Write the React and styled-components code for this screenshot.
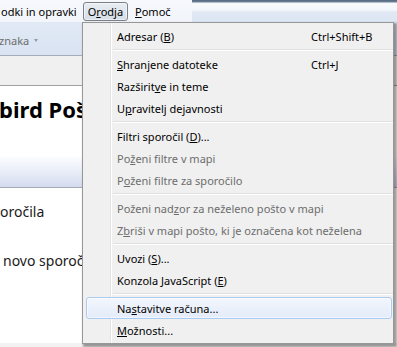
import React from 'react';
import styled, { createGlobalStyle } from 'styled-components';

const Global = createGlobalStyle`
  html, body { margin: 0; padding: 0; }
  body {
    width: 397px;
    height: 347px;
    overflow: hidden;
    background: #ffffff;
    font-family: "Noto Sans", "Open Sans", sans-serif;
  }
`;

const Window = styled.div`
  position: relative;
  width: 397px;
  height: 347px;
  overflow: hidden;
  display: flex;
  flex-direction: column;
  background: #ffffff;
`;

const MenuBar = styled.div`
  height: 22px;
  flex: none;
  display: flex;
  align-items: center;
  background: linear-gradient(to bottom, #f6f8fc 0%, #f2f5fa 100%);
  font-size: 11px;
  color: #000;
`;

const MenuBarItem = styled.div`
  height: 17px;
  display: flex;
  align-items: center;
  padding: 0 ${(p) => p.$pr ?? 6}px 0 ${(p) => p.$pl ?? 6}px;
  margin-left: ${(p) => p.$ml ?? 0}px;
  border: 1px solid ${(p) => (p.$open ? '#7b7f86' : 'transparent')};
  border-radius: 3px;
  background: ${(p) =>
    p.$open ? 'linear-gradient(to bottom, #e8edf3 0%, #d6dde6 100%)' : 'transparent'};
  box-shadow: ${(p) => (p.$open ? 'inset 0 0 0 1px rgba(255,255,255,0.5)' : 'none')};
  white-space: nowrap;
`;

const MenuBarFill = styled.div`
  flex: 1;
  align-self: stretch;
  margin-left: 14px;
  background: linear-gradient(
    to bottom,
    #53687f 0px,
    #6d8096 2px,
    #f7f9fc 3px,
    #f4f7fb 10px,
    #e0e8f4 12px,
    #dce5f3 22px
  );
`;

const Key = styled.span`
  text-decoration: underline;
  text-underline-offset: 1px;
`;

const Toolbar = styled.div`
  height: 34px;
  flex: none;
  display: flex;
  align-items: center;
  padding-top: 4px;
  box-sizing: border-box;
  background: linear-gradient(to bottom, #e1e9f5 0%, #d9e3f2 100%);
  border-bottom: 1px solid #a5adb8;
  font-size: 11px;
  color: #6d6d6d;
`;

const ToolbarText = styled.span`
  margin-left: -1px;
  white-space: nowrap;
`;

const Caret = styled.span`
  display: inline-block;
  margin-left: 5px;
  width: 0;
  height: 0;
  border-left: 2.5px solid transparent;
  border-right: 2.5px solid transparent;
  border-top: 3px solid #9a9a9a;
  vertical-align: middle;
`;

const TabStrip = styled.div`
  height: 29px;
  flex: none;
  background: #f0f0f0;
  border-bottom: 1px solid #a0a0a0;
`;

const Content = styled.div`
  flex: 1;
  display: flex;
  flex-direction: column;
  background: #ffffff;
`;

const Heading = styled.div`
  margin-top: 10px;
  margin-left: -1px;
  font-size: 22px;
  line-height: 26px;
  font-weight: 700;
  color: #000;
  white-space: nowrap;
`;

const Band = styled.div`
  margin-top: 35px;
  height: 30px;
  flex: none;
  background: linear-gradient(to bottom, #fbfcfe 0%, #e6ebf6 55%, #d3dbee 100%);
  border-bottom: 1px solid #a6a9b0;
`;

const BodyLine = styled.div`
  margin-top: ${(p) => p.$mt}px;
  margin-left: ${(p) => p.$ml ?? 0}px;
  font-size: 14px;
  line-height: 20px;
  color: #1a1a1a;
  white-space: nowrap;
`;

const BottomStrip = styled.div`
  margin-top: auto;
  height: 4px;
  flex: none;
  background: #f2f2f2;
`;

const Popup = styled.div`
  position: absolute;
  left: 82px;
  top: 22px;
  width: 312px;
  height: 322px;
  box-sizing: border-box;
  border: 1px solid #979797;
  padding: 2px 0;
  display: flex;
  flex-direction: column;
  background-color: #f0f0f0;
  background-image: linear-gradient(
    to right,
    transparent 27px,
    #e2e3e3 27px,
    #e2e3e3 28px,
    #ffffff 28px,
    #ffffff 29px,
    transparent 29px
  );
  box-shadow: 2px 2px 2px 1px rgba(0, 0, 0, 0.38);
  font-size: 11px;
  z-index: 10;
`;

const Item = styled.div`
  height: 22px;
  flex: none;
  box-sizing: border-box;
  margin: 0 1px 0 3px;
  padding-left: 30px;
  display: grid;
  grid-template-columns: 194px auto;
  align-items: center;
  border: 1px solid ${(p) => (p.$active ? '#a9cbf2' : 'transparent')};
  border-radius: 3px;
  background: ${(p) =>
    p.$active ? 'linear-gradient(to bottom, #f2f6fd 0%, #e4ecf9 100%)' : 'transparent'};
  box-shadow: ${(p) => (p.$active ? 'inset 0 0 0 1px rgba(255,255,255,0.55)' : 'none')};
  color: ${(p) => (p.$disabled ? '#6d6d6d' : '#000')};
  white-space: nowrap;
`;

const Shortcut = styled.span`
  color: inherit;
`;

const Separator = styled.div`
  height: 6px;
  flex: none;
  margin-left: 30px;
  display: flex;
  flex-direction: column;
  justify-content: center;
  &::before {
    content: '';
    display: block;
    height: 1px;
    background: #e0e0e0;
  }
  &::after {
    content: '';
    display: block;
    height: 1px;
    background: #ffffff;
  }
`;

function Label({ text }) {
  const i = text.indexOf('&');
  if (i < 0) return <span>{text}</span>;
  return (
    <span>
      {text.slice(0, i)}
      <Key>{text[i + 1]}</Key>
      {text.slice(i + 2)}
    </span>
  );
}

const menu = [
  { t: 'Adresar (&B)', s: 'Ctrl+Shift+B' },
  'sep',
  { t: '&Shranjene datoteke', s: 'Ctrl+J' },
  { t: 'Razširit&ve in teme' },
  { t: 'U&pravitelj dejavnosti' },
  'sep',
  { t: 'Filtri sporočil (&D)...' },
  { t: 'Po&ženi filtre v mapi', d: true },
  { t: 'P&oženi filtre za sporočilo', d: true },
  'sep',
  { t: 'Poženi nad&zor za neželeno pošto v mapi', d: true },
  { t: 'Z&briši v mapi pošto, ki je označena kot neželena', d: true },
  'sep',
  { t: 'Uvozi (&S)...' },
  { t: 'Konzola JavaScript (&E)' },
  'sep',
  { t: 'Na&stavitve računa...', a: true },
  { t: '&Možnosti...' },
];

export default function App() {
  return (
    <>
      <Global />
      <Window>
        <MenuBar>
          <MenuBarItem $pl={0} $ml={0} $pr={5}>odki in opravki</MenuBarItem>
          <MenuBarItem $open $pl={4} $pr={4}>
            <Label text="O&rodja" />
          </MenuBarItem>
          <MenuBarItem>
            <Label text="&Pomoč" />
          </MenuBarItem>
          <MenuBarFill />
        </MenuBar>
        <Toolbar>
          <ToolbarText>znaka</ToolbarText>
          <Caret />
        </Toolbar>
        <TabStrip />
        <Content>
          <Heading>bird Pošta</Heading>
          <Band />
          <BodyLine $mt={14} $ml={0}>oročila</BodyLine>
          <BodyLine $mt={29} $ml={3}>novo sporočilo</BodyLine>
          <BottomStrip />
        </Content>
        <Popup>
          {menu.map((m, i) =>
            m === 'sep' ? (
              <Separator key={i} />
            ) : (
              <Item key={i} $disabled={m.d} $active={m.a}>
                <Label text={m.t} />
                {m.s ? <Shortcut>{m.s}</Shortcut> : <span />}
              </Item>
            )
          )}
        </Popup>
      </Window>
    </>
  );
}
